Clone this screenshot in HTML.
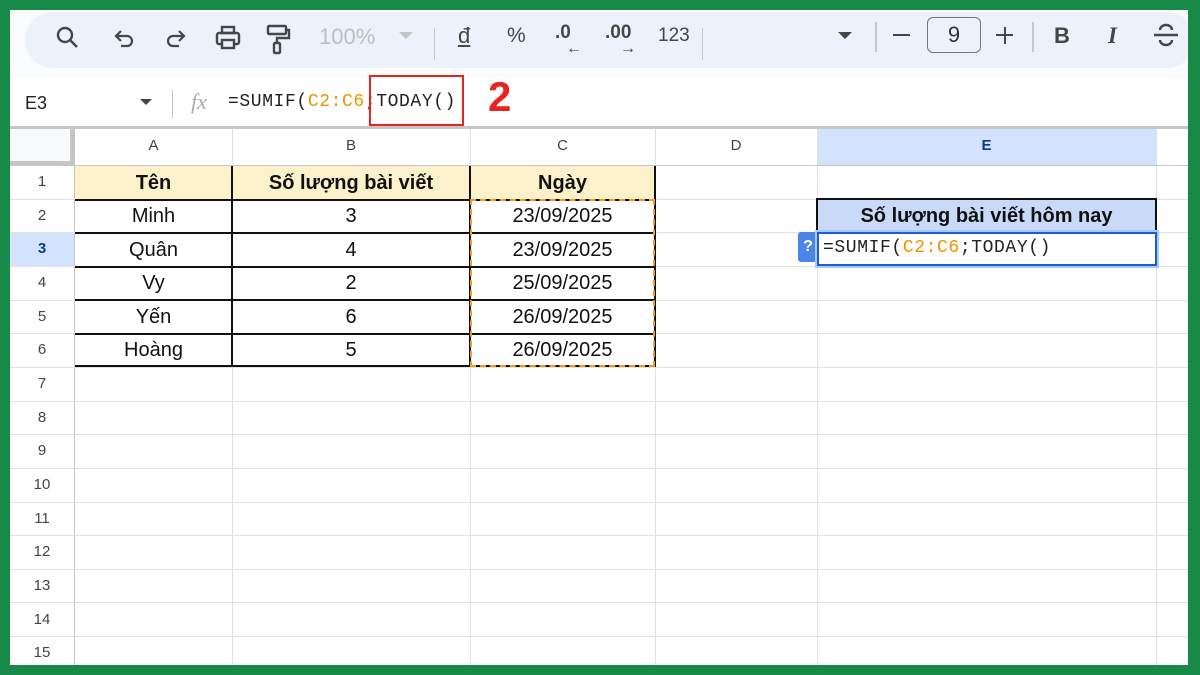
<!DOCTYPE html>
<html><head><meta charset="utf-8"><style>
*{margin:0;padding:0;box-sizing:border-box}
body{width:1200px;height:675px;background:#178a48;position:relative;overflow:hidden;font-family:"Liberation Sans",Arial,sans-serif}
.a{position:absolute}
#app{left:10px;top:10px;width:1178px;height:655px;background:#fff;overflow:hidden}
.hl{position:absolute;background:#e1e1e1;height:1px}
.vl{position:absolute;background:#e1e1e1;width:1px}
.rn{position:absolute;left:0;width:64px;text-align:center;font-size:15px;color:#444}
.ch{position:absolute;top:117px;height:38px;line-height:38px;text-align:center;font-size:15px;color:#444}
.c{position:absolute;text-align:center;font-size:20px;color:#111;height:34px;line-height:34px}
.mono{font-family:"Liberation Mono",monospace;letter-spacing:0.6px}
</style></head><body>
<div id="app" class="a">
 <div class="a" style="left:0;top:0;width:1178px;height:68px;background:#f9fbfd"></div>
 <div class="a" style="left:15px;top:2px;width:1170px;height:56px;background:#edf2fa;border-radius:28px"></div>
 <svg class="a" style="left:45px;top:15px" width="26" height="26" viewBox="0 0 26 26"><circle cx="10" cy="10" r="7" fill="none" stroke="#444746" stroke-width="2.4"/><path d="M15 15l7 7" stroke="#444746" stroke-width="2.6"/></svg>
 <svg class="a" style="left:103px;top:17px" width="24" height="24" viewBox="0 0 24 24"><path d="M8 4L3 9l5 5M3 9h11a5 5 0 010 10H8" fill="none" stroke="#444746" stroke-width="2.2"/></svg>
 <svg class="a" style="left:153px;top:17px" width="24" height="24" viewBox="0 0 24 24"><path d="M16 4l5 5-5 5M21 9H10a5 5 0 000 10h6" fill="none" stroke="#444746" stroke-width="2.2"/></svg>
 <svg class="a" style="left:204px;top:14px" width="28" height="28" viewBox="0 0 28 28"><rect x="8" y="3" width="12" height="6" fill="none" stroke="#444746" stroke-width="2.4"/><rect x="3" y="9" width="22" height="11" rx="2" fill="none" stroke="#444746" stroke-width="2.4"/><rect x="8" y="16" width="12" height="8" fill="#edf2fa" stroke="#444746" stroke-width="2.4"/></svg>
 <svg class="a" style="left:255px;top:13px" width="26" height="32" viewBox="0 0 26 32"><rect x="3" y="3" width="18" height="8" rx="1" fill="none" stroke="#444746" stroke-width="2.4"/><path d="M21 7h3v8H12v5" fill="none" stroke="#444746" stroke-width="2.4"/><rect x="9" y="20" width="6" height="10" rx="1" fill="none" stroke="#444746" stroke-width="2.4"/></svg>
 <div class="a" style="left:309px;top:14px;font-size:22px;color:#bdbdbd">100%</div>
 <div class="a" style="left:389px;top:22px;border-left:7px solid transparent;border-right:7px solid transparent;border-top:7px solid #c4c4c4"></div>
 <div class="a" style="left:424px;top:18px;width:1px;height:32px;background:#c7c7c7"></div>
 <div class="a" style="left:448px;top:13px;font-size:22px;color:#444746;text-decoration:underline">đ</div>
 <div class="a" style="left:497px;top:14px;font-size:21px;color:#444746">%</div>
 <div class="a" style="left:545px;top:12px;font-size:19px;color:#444746;font-weight:bold">.0</div>
 <div class="a" style="left:556px;top:30px;font-size:16px;color:#444746">←</div>
 <div class="a" style="left:595px;top:12px;font-size:19px;color:#444746;font-weight:bold">.00</div>
 <div class="a" style="left:610px;top:30px;font-size:16px;color:#444746">→</div>
 <div class="a" style="left:648px;top:15px;font-size:19px;color:#444746">123</div>
 <div class="a" style="left:692px;top:18px;width:1px;height:32px;background:#c7c7c7"></div>
 <div class="a" style="left:828px;top:22px;border-left:7px solid transparent;border-right:7px solid transparent;border-top:7px solid #444746"></div>
 <div class="a" style="left:865px;top:12px;width:1.5px;height:30px;background:#c7c7c7"></div>
 <div class="a" style="left:883px;top:24px;width:17px;height:2px;background:#444746"></div>
 <div class="a" style="left:917px;top:7px;width:54px;height:36px;border:1.5px solid #747775;border-radius:6px;text-align:center;line-height:33px;font-size:22px;color:#333">9</div>
 <div class="a" style="left:986px;top:24px;width:17px;height:2px;background:#444746"></div>
 <div class="a" style="left:993.5px;top:16.5px;width:2px;height:17px;background:#444746"></div>
 <div class="a" style="left:1022px;top:12px;width:1.5px;height:30px;background:#c7c7c7"></div>
 <div class="a" style="left:1044px;top:13px;font-size:22px;font-weight:bold;color:#444746">B</div>
 <div class="a" style="left:1098px;top:13px;font-size:23px;font-style:italic;font-family:'Liberation Serif',serif;font-weight:bold;color:#444746">I</div>
 <svg class="a" style="left:1143px;top:11px" width="26" height="28" viewBox="0 0 26 28"><path d="M7 9a6 5 0 0112 0M1 14h24M7 19a6 5 0 0012 0" fill="none" stroke="#444746" stroke-width="2.4"/></svg>
 <div class="a" style="left:15px;top:83px;font-size:18px;color:#222">E3</div>
 <div class="a" style="left:130px;top:89px;border-left:6px solid transparent;border-right:6px solid transparent;border-top:6px solid #444"></div>
 <div class="a" style="left:162px;top:80px;width:1px;height:28px;background:#c7c7c7"></div>
 <div class="a" style="left:181px;top:79px;font-size:22px;font-style:italic;color:#aaa;font-family:'Liberation Serif',serif">fx</div>
 <div class="a mono" style="left:218px;top:82px;font-size:18px;color:#222">=SUMIF(<span style="color:#f09300">C2:C6</span>;TODAY()</div>
 <div class="a" style="left:359px;top:65px;width:95px;height:51px;border:2.5px solid #e8241f"></div>
 <div class="a" style="left:478px;top:63px;font-size:42px;font-weight:bold;color:#e8241f">2</div>
 <div class="a" style="left:0;top:116px;width:1178px;height:3px;background:#c4c7c5"></div>
 <div class="a" style="left:0;top:119px;width:64px;height:36px;background:#f8f9fa"></div>
 <div class="a" style="left:60px;top:119px;width:4px;height:36px;background:#c4c7c5"></div>
 <div class="a" style="left:0;top:151px;width:64px;height:4px;background:#c4c7c5"></div>
 <div class="a" style="left:807px;top:119px;width:339px;height:36px;background:#d3e3fd"></div>
 <div class="a" style="left:0;top:223px;width:64px;height:34px;background:#d3e3fd"></div>
 <div class="ch" style="left:65px;width:157px">A</div>
 <div class="ch" style="left:222px;width:238px">B</div>
 <div class="ch" style="left:460px;width:185px">C</div>
 <div class="ch" style="left:645px;width:162px">D</div>
 <div class="ch" style="left:807px;width:339px;color:#0b3c8c;font-weight:bold">E</div>
 <div class="vl" style="left:64px;top:119px;height:540px;background:#c4c7c5"></div>
 <div class="vl" style="left:222px;top:119px;height:540px"></div>
 <div class="vl" style="left:460px;top:119px;height:540px"></div>
 <div class="vl" style="left:645px;top:119px;height:540px"></div>
 <div class="vl" style="left:807px;top:119px;height:540px"></div>
 <div class="vl" style="left:1146px;top:119px;height:540px"></div>
 <div class="hl" style="left:0;top:155px;width:1178px;background:#c4c7c5"></div>
 <div id="rows"></div>
 <div class="a" style="left:65px;top:156px;width:580px;height:33px;background:#fdf1cc"></div>
 <div class="c" style="left:65px;top:156px;width:157px;font-weight:bold">Tên</div>
 <div class="c" style="left:222px;top:156px;width:238px;font-weight:bold">Số lượng bài viết</div>
 <div class="c" style="left:460px;top:156px;width:185px;font-weight:bold">Ngày</div>
 <div class="a" style="left:65px;top:189px;width:580px;height:168px;border-top:2px solid #111;border-bottom:2px solid #111"></div>
 <div class="a" style="left:221px;top:156px;width:2px;height:201px;background:#111"></div>
 <div class="a" style="left:459px;top:156px;width:2px;height:201px;background:#111"></div>
 <div class="a" style="left:644px;top:156px;width:2px;height:201px;background:#111"></div>
 <div class="a" style="left:65px;top:222px;width:580px;height:2px;background:#111"></div>
 <div class="a" style="left:65px;top:256px;width:580px;height:2px;background:#111"></div>
 <div class="a" style="left:65px;top:289px;width:580px;height:2px;background:#111"></div>
 <div class="a" style="left:65px;top:323px;width:580px;height:2px;background:#111"></div>
 <div class="a" style="left:460px;top:189px;width:185px;height:168px;border:2.5px dashed #f59a23"></div>
 <div class="c" style="left:65px;top:189px;width:157px">Minh</div><div class="c" style="left:222px;top:189px;width:238px">3</div><div class="c" style="left:460px;top:189px;width:185px">23/09/2025</div>
 <div class="c" style="left:65px;top:223px;width:157px">Quân</div><div class="c" style="left:222px;top:223px;width:238px">4</div><div class="c" style="left:460px;top:223px;width:185px">23/09/2025</div>
 <div class="c" style="left:65px;top:256px;width:157px">Vy</div><div class="c" style="left:222px;top:256px;width:238px">2</div><div class="c" style="left:460px;top:256px;width:185px">25/09/2025</div>
 <div class="c" style="left:65px;top:290px;width:157px">Yến</div><div class="c" style="left:222px;top:290px;width:238px">6</div><div class="c" style="left:460px;top:290px;width:185px">26/09/2025</div>
 <div class="c" style="left:65px;top:323px;width:157px">Hoàng</div><div class="c" style="left:222px;top:323px;width:238px">5</div><div class="c" style="left:460px;top:323px;width:185px">26/09/2025</div>
 <div class="a" style="left:806px;top:188px;width:341px;height:36px;background:#c9daf8;border:2px solid #111;border-bottom:none"></div>
 <div class="c" style="left:807px;top:189px;width:339px;font-weight:bold">Số lượng bài viết hôm nay</div>
 <div class="a" style="left:788px;top:222px;width:20px;height:30px;background:#4a86e8;border-radius:3px;color:#fff;font-weight:bold;font-size:16px;text-align:center;line-height:30px">?</div>
 <div class="a" style="left:805px;top:220px;width:344px;height:38px;border:2px solid #a8c7fa;background:#a8c7fa"></div>
 <div class="a mono" style="left:807px;top:222px;width:340px;height:34px;border:2.5px solid #1a5fd0;background:#fff;font-size:18px;line-height:28px;padding-left:4px;color:#222">=SUMIF(<span style="color:#f09300">C2:C6</span>;TODAY()</div>
</div>
<script>
var r=document.getElementById('rows'),h='';
for(var i=1;i<=15;i++){var t=155+33.65*(i-1);
h+='<div class="hl" style="left:0;top:'+(t+33.65).toFixed(1)+'px;width:1178px"></div>';
h+='<div class="rn" style="top:'+t.toFixed(1)+'px;height:34px;line-height:34px;'+(i==3?'color:#0b3c8c;font-weight:bold':'')+'">'+i+'</div>';}
r.outerHTML=h;
</script>
</body></html>
